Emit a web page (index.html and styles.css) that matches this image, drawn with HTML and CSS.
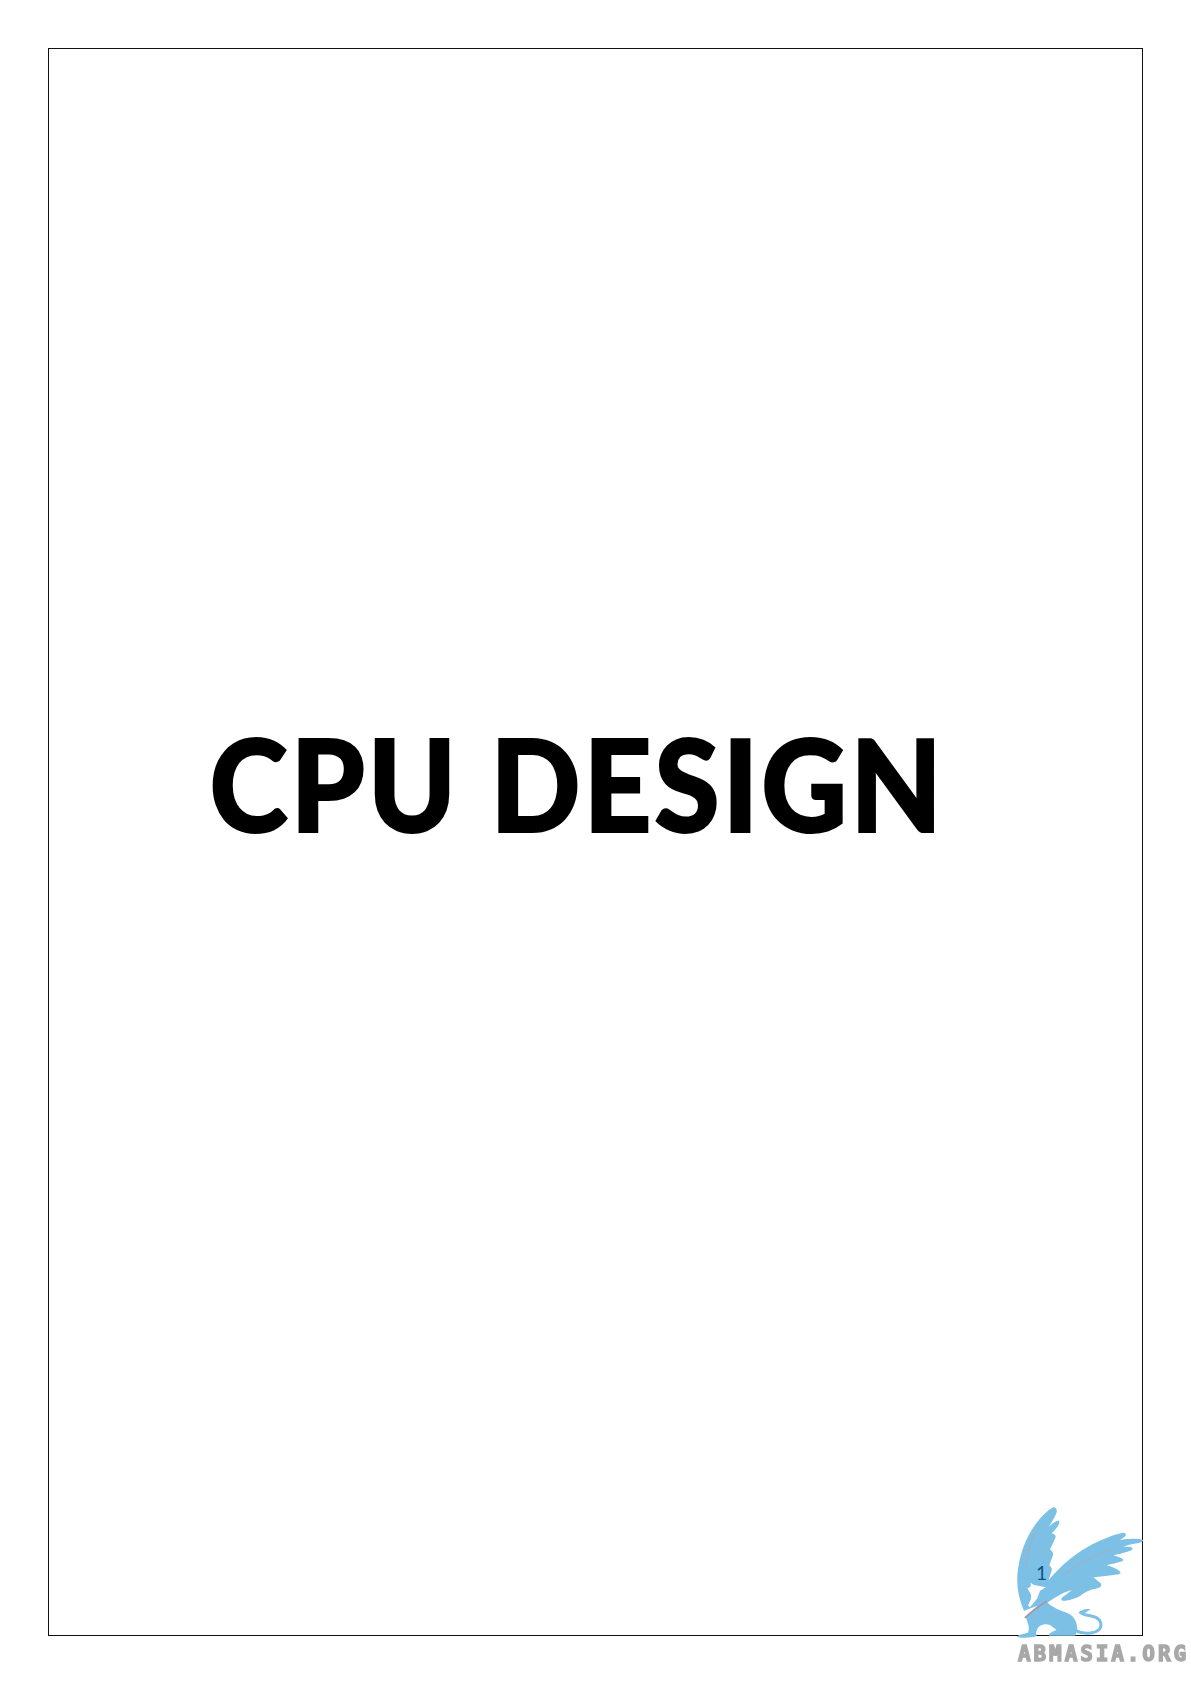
FILE: index.html
```html
<!DOCTYPE html>
<html lang="en">
<head>
<meta charset="utf-8">
<title>CPU Design</title>
<link rel="stylesheet" href="styles.css">
</head>
<body>
<main class="page">
  <h1 class="title">CPU DESIGN</h1>
</main>
<svg class="griffin" viewBox="0 0 573 582" aria-hidden="true">
  <path class="griffin-body" d="M160 52 C170 52 173 62 168 72 C162 86 154 98 146 110 C156 102 170 90 177 93 C182 100 170 116 155 130 C164 132 170 138 165 146 L150 178 C158 184 162 192 158 198 L148 226 C156 232 158 240 152 250 L142 284 L100 352 L72 362 C58 330 50 296 52 256 C56 200 76 142 110 98 C128 76 146 58 160 52 Z"/>
  <path class="griffin-body" d="M134 284 C170 240 215 196 268 168 C300 150 340 134 368 128 C380 128 380 136 372 142 L360 150 C385 146 412 145 430 150 C430 157 410 160 394 163 C384 165 376 168 370 171 C385 170 398 170 398 176 C396 184 370 188 340 196 C352 200 370 204 370 211 C364 218 340 220 320 226 C340 232 360 240 362 249 C358 256 320 256 280 262 L302 280 C308 288 300 294 284 297 C270 298 250 310 240 318 C226 326 200 334 188 332 C180 330 184 322 196 316 L216 300 C190 306 165 322 140 340 L100 352 Z"/>
  <path class="griffin-body" d="M76 380 C90 366 114 344 138 332 C150 348 172 358 200 368 C222 376 232 396 232 420 L226 437 L146 437 C148 428 160 424 170 420 L150 405 C135 400 118 405 112 416 L108 430 L110 438 C100 443 60 445 52 441 C50 435 72 431 84 428 C90 414 84 396 76 380 Z"/>
  <path class="griffin-tail" d="M226 422 C250 434 285 432 298 418 C308 404 302 390 288 382 C272 376 254 376 242 368"/>
  <path class="griffin-tuft" d="M236 368 C246 358 258 355 272 358 L258 367 L246 373 Z"/>
  <path class="griffin-cut" d="M92 278 L102 285 L138 292 L120 302 L112 325 L90 352 L84 346 C92 332 96 322 92 312 L82 295 L92 290 Z"/>
  <path class="griffin-vein" d="M106 124 C92 150 84 180 78 226"/>
  <path class="griffin-vein" d="M336 180 C290 190 235 218 198 252"/>
  <path class="griffin-vein griffin-vein-warm" d="M138 334 C120 346 96 364 76 382"/>
</svg>
<span class="page-number">1</span>
<p class="watermark">ABMASIA.ORG</p>
</body>
</html>
```

FILE: styles.css
```css
html, body {
  margin: 0;
  padding: 0;
  background: #ffffff;
}

body {
  position: relative;
  width: 1191px;
  height: 1684px;
  overflow: hidden;
  padding: 48px;
  box-sizing: border-box;
}

.page {
  width: 1095px;
  height: 1588px;
  box-sizing: border-box;
  border: 1px solid #111111;
  display: flex;
  justify-content: center;
  align-items: center;
}

.title {
  margin: 0 37px 118px 0;
  font-family: "Lato", "Liberation Sans", sans-serif;
  font-weight: 900;
  font-size: 127px;
  line-height: 1.2;
  letter-spacing: 3px;
  color: #000000;
  white-space: nowrap;
  -webkit-text-stroke: 2px #000000;
  transform: scaleX(0.935);
}

.griffin {
  position: absolute;
  left: 1000px;
  top: 1490px;
  width: 191px;
  height: 194px;
  filter: blur(0.5px);
}

.griffin-body,
.griffin-tuft {
  fill: #7cc0e6;
}

.griffin-tail {
  fill: none;
  stroke: #7cc0e6;
  stroke-width: 9;
  stroke-linecap: round;
}

.griffin-cut {
  fill: #ffffff;
}

.griffin-vein {
  fill: none;
  stroke: #a4aec2;
  stroke-width: 3.5;
  stroke-linecap: round;
}

.griffin-vein-warm {
  stroke: #b0909f;
  stroke-width: 5;
}

.page-number {
  position: absolute;
  left: 1036px;
  top: 1561px;
  font-family: "Lato", "Liberation Sans", sans-serif;
  font-size: 19px;
  line-height: 24px;
  color: #0b4f86;
}

.watermark {
  position: absolute;
  left: 1018px;
  top: 1642px;
  margin: 0;
  font-family: "DejaVu Sans Mono", monospace;
  font-weight: 700;
  font-size: 21px;
  line-height: 24px;
  letter-spacing: 2.9px;
  color: #a8a8a8;
  -webkit-text-stroke: 1.4px #a8a8a8;
  filter: blur(0.6px);
}
```
